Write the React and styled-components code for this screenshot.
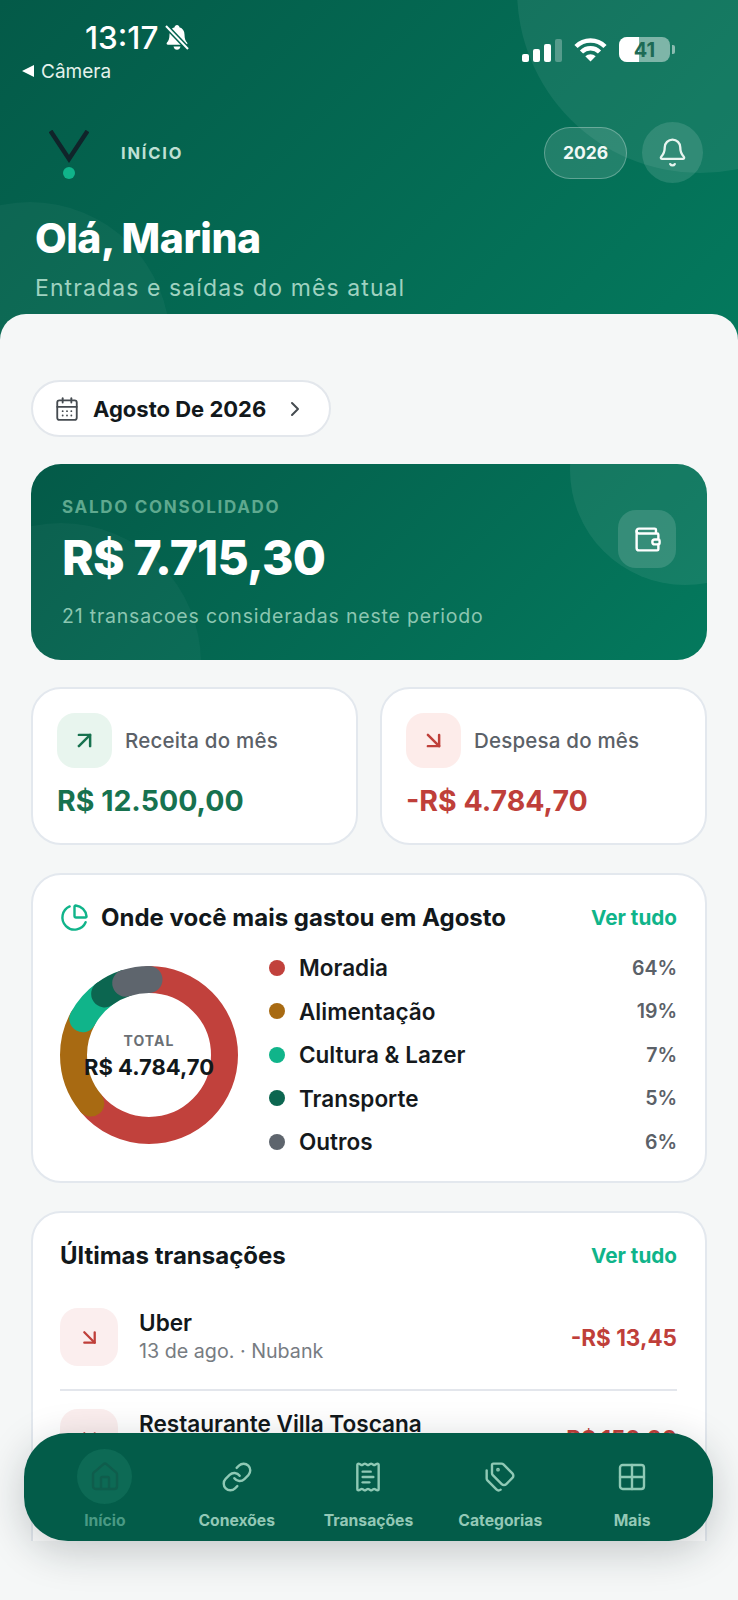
import React from 'react';
import styled, { createGlobalStyle } from 'styled-components';
import {
  ArrowDownRight,
  ArrowUpRight,
  Bell,
  CalendarDays,
  ChartPie,
  ChevronRight,
  Grid2x2,
  House,
  Link,
  ReceiptText,
  Tags,
  Wallet,
} from 'lucide-react';

const FONT = '"Inter", "Liberation Sans", sans-serif';

const GlobalStyle = createGlobalStyle`
  * { box-sizing: border-box; }
  body {
    margin: 0;
    background: #f5f7f7;
    font-family: ${FONT};
  }
`;

const Page = styled.div`
  position: relative;
  width: 738px;
  height: 1600px;
  overflow: hidden;
  background: #f5f7f7;
`;

const Scroll = styled.div`
  height: 1541px;
  overflow: hidden;
`;

const Hero = styled.header`
  position: relative;
  height: 340px;
  overflow: hidden;
  background: linear-gradient(135deg, #045a48 0%, #04795d 100%);
`;

const Blob = styled.div`
  position: absolute;
  border-radius: 50%;
  background: rgba(255, 255, 255, ${(p) => p.$alpha || 0.07});
  width: ${(p) => p.$size}px;
  height: ${(p) => p.$size}px;
  top: ${(p) => p.$top}px;
  left: ${(p) => p.$left}px;
`;

const StatusBar = styled.div`
  position: relative;
  display: flex;
  justify-content: space-between;
  height: 122px;
  padding: 20px 63px 0 22px;
  color: #fff;
`;

const StatusLeft = styled.div`
  display: flex;
  flex-direction: column;
  gap: 7px;
`;

const TimeRow = styled.div`
  display: flex;
  align-items: center;
  gap: 6px;
  margin-left: 63px;
  height: 34px;
  font-size: 31.5px;
  font-weight: 500;
`;

const BackRow = styled.div`
  display: flex;
  align-items: center;
  gap: 7px;
  height: 20px;
  font-size: 19px;
  color: #e4f2ec;
`;

const BackArrow = styled.span`
  width: 0;
  height: 0;
  border-top: 6px solid transparent;
  border-bottom: 6px solid transparent;
  border-right: 12px solid #fff;
`;

const StatusRight = styled.div`
  display: flex;
  align-items: center;
  gap: 12px;
  height: 25px;
  margin-top: 17px;
`;

const Signal = styled.div`
  display: flex;
  align-items: flex-end;
  gap: 4px;
  height: 23px;
  margin-top: 1px;
`;

const SignalBar = styled.span`
  width: 7px;
  height: ${(p) => p.$h}px;
  border-radius: 2px;
  background: ${(p) => (p.$dim ? 'rgba(255,255,255,.28)' : '#fff')};
`;

const Battery = styled.div`
  position: relative;
  width: 51px;
  height: 25px;
  border-radius: 8px;
  overflow: hidden;
  background: rgba(255, 255, 255, 0.45);
  display: flex;
  align-items: center;
  justify-content: center;
  font-size: 20px;
  font-weight: 700;
  color: #1d6a55;

  &::before {
    content: '';
    position: absolute;
    inset: 0 31px 0 0;
    background: #fff;
  }

  span {
    position: relative;
  }
`;

const BatteryNub = styled.span`
  width: 3px;
  height: 9px;
  margin-left: -10px;
  border-radius: 0 2px 2px 0;
  background: rgba(255, 255, 255, 0.5);
`;

const TopBar = styled.div`
  position: relative;
  display: flex;
  align-items: center;
  justify-content: space-between;
  height: 61px;
  padding: 0 35px 0 49px;
`;

const TopLeft = styled.div`
  display: flex;
  align-items: center;
  gap: 32px;
`;

const Logo = styled.svg`
  display: block;
  width: 40px;
  height: 50px;
  margin-top: 4px;
`;

const PageLabel = styled.span`
  font-size: 16.5px;
  font-weight: 700;
  letter-spacing: 1.8px;
  margin-top: 1px;
  color: #bfe0d5;
`;

const TopRight = styled.div`
  display: flex;
  align-items: center;
  gap: 15px;
`;

const YearPill = styled.div`
  display: flex;
  align-items: center;
  justify-content: center;
  width: 83px;
  height: 52px;
  border-radius: 26px;
  border: 1.5px solid rgba(255, 255, 255, 0.28);
  background: rgba(255, 255, 255, 0.12);
  color: #f0f8f5;
  font-size: 17.5px;
  font-weight: 700;
`;

const BellButton = styled.div`
  display: flex;
  align-items: center;
  justify-content: center;
  width: 61px;
  height: 61px;
  border-radius: 50%;
  background: rgba(255, 255, 255, 0.12);
  color: #e8f4ef;
`;

const Greeting = styled.h1`
  position: relative;
  margin: 32px 0 0 35px;
  font-size: 41px;
  line-height: 46px;
  font-weight: 800;
  letter-spacing: -0.5px;
  color: #fff;
`;

const GreetingSub = styled.p`
  position: relative;
  margin: 12px 0 0 35px;
  font-size: 23px;
  line-height: 30px;
  letter-spacing: 1.1px;
  color: #9fd2c0;
`;

const Sheet = styled.main`
  position: relative;
  margin-top: -26px;
  padding: 66px 31px 0;
  border-radius: 26px 26px 0 0;
  background: #f5f7f7;
`;

const MonthPill = styled.div`
  display: inline-flex;
  align-items: center;
  width: 300px;
  height: 57px;
  padding: 0 22px 0 21px;
  border-radius: 29px;
  border: 2px solid #e3e7ec;
  background: #fff;
  vertical-align: top;
`;

const MonthText = styled.span`
  margin: 0 auto 0 13px;
  font-size: 22px;
  font-weight: 700;
  color: #12181b;
`;

const BalanceCard = styled.section`
  position: relative;
  display: flex;
  justify-content: space-between;
  height: 196px;
  margin-top: 27px;
  padding: 32px 31px 0 31px;
  border-radius: 30px;
  overflow: hidden;
  background: linear-gradient(135deg, #045a48 0%, #04795d 100%);
`;

const BalanceText = styled.div`
  position: relative;
`;

const BalanceLabel = styled.div`
  font-size: 17px;
  line-height: 22px;
  font-weight: 700;
  letter-spacing: 1.7px;
  color: #5fa98f;
`;

const BalanceValue = styled.div`
  margin-top: 12px;
  font-size: 48px;
  line-height: 56px;
  font-weight: 800;
  letter-spacing: -0.8px;
  color: #fff;
`;

const BalanceSub = styled.div`
  margin-top: 18px;
  font-size: 19.5px;
  line-height: 24px;
  letter-spacing: 0.8px;
  color: #8cc6b1;
`;

const WalletTile = styled.div`
  position: relative;
  display: flex;
  align-items: center;
  justify-content: center;
  width: 58px;
  height: 58px;
  margin-top: 14px;
  border-radius: 18px;
  background: rgba(255, 255, 255, 0.14);
  color: #fff;
`;

const SummaryRow = styled.div`
  display: grid;
  grid-template-columns: 1fr 1fr;
  gap: 22px;
  margin-top: 27px;
`;

const Card = styled.section`
  border: 2px solid #e3e8ee;
  border-radius: 30px;
  background: #fff;
`;

const SummaryCard = styled.div`
  height: 158px;
  padding: 24px 24px 0;
  border: 2px solid #e3e8ee;
  border-radius: 30px;
  background: #fff;
`;

const SummaryHead = styled.div`
  display: flex;
  align-items: center;
  gap: 13px;
`;

const Tile = styled.div`
  display: flex;
  flex: none;
  align-items: center;
  justify-content: center;
  width: ${(p) => p.$size}px;
  height: ${(p) => p.$size}px;
  border-radius: 18px;
  background: ${(p) => p.$bg};
  color: ${(p) => p.$color};
`;

const SummaryLabel = styled.span`
  font-size: 20.5px;
  font-weight: 500;
  letter-spacing: 0.2px;
  color: #5b6168;
`;

const SummaryValue = styled.div`
  margin-top: 16px;
  font-size: 28.5px;
  line-height: 34px;
  font-weight: 700;
  color: ${(p) => p.$color};
`;

const CategoryCard = styled(Card)`
  height: 310px;
  margin-top: 28px;
  padding: 27px 28px 0 27px;
`;

const TransactionCard = styled(Card)`
  height: 420px;
  margin-top: 28px;
  padding: 27px 28px 0 27px;
`;

const CardHead = styled.div`
  display: flex;
  align-items: center;
  height: 30px;
`;

const CardTitle = styled.h2`
  margin: 0 auto 0 ${(p) => p.$gap || 0}px;
  font-size: 24px;
  font-weight: 700;
  color: #12181b;
`;

const SeeAll = styled.a`
  font-size: 20.7px;
  font-weight: 700;
  color: #10b48a;
`;

const CategoryBody = styled.div`
  display: flex;
  gap: 31px;
  margin-top: 14px;
`;

const Donut = styled.div`
  position: relative;
  flex: none;
  width: 178px;
  height: 178px;
  margin-top: 20px;
`;

const DonutCenter = styled.div`
  position: absolute;
  inset: 0;
  display: flex;
  flex-direction: column;
  align-items: center;
  justify-content: center;
`;

const DonutLabel = styled.div`
  font-size: 14px;
  line-height: 20px;
  font-weight: 700;
  letter-spacing: 1.1px;
  color: #6b7075;
`;

const DonutValue = styled.div`
  margin-top: 3px;
  font-size: 22px;
  line-height: 26px;
  font-weight: 700;
  white-space: nowrap;
  color: #12181b;
`;

const Legend = styled.ul`
  flex: 1;
  margin: 0;
  padding: 0;
  list-style: none;
`;

const LegendRow = styled.li`
  display: flex;
  align-items: center;
  height: 43.5px;
`;

const Dot = styled.span`
  width: 16px;
  height: 16px;
  border-radius: 50%;
  background: ${(p) => p.$color};
`;

const LegendName = styled.span`
  margin: 0 auto 0 14px;
  font-size: 22.5px;
  font-weight: 600;
  color: #15191c;
`;

const LegendPct = styled.span`
  font-size: 19.5px;
  font-weight: 600;
  color: #5b6168;
`;

const TxRow = styled.div`
  display: flex;
  align-items: center;
  gap: 21px;
  padding: ${(p) => (p.$first ? '0 0 23px' : '18px 0 23px')};
  margin-top: ${(p) => (p.$first ? 38 : 0)}px;
  border-bottom: ${(p) => (p.$first ? '2px solid #e3e6ec' : 'none')};
`;

const TxText = styled.div`
  margin-right: auto;
`;

const TxTitle = styled.div`
  font-size: 22.6px;
  line-height: 28px;
  font-weight: 600;
  color: #12181b;
`;

const TxSub = styled.div`
  font-size: 19.7px;
  line-height: 28px;
  color: #777c82;
`;

const TxAmount = styled.div`
  font-size: 22.5px;
  font-weight: 700;
  color: #bf3f3a;
`;

const Nav = styled.nav`
  position: absolute;
  left: 24px;
  top: 1433px;
  display: grid;
  grid-template-columns: repeat(5, 1fr);
  width: 689px;
  height: 108px;
  padding: 16px 15px 0;
  border-radius: 44px;
  background: #035c49;
  box-shadow: 0 10px 40px rgba(20, 30, 35, 0.22);
`;

const NavItem = styled.a`
  display: flex;
  flex-direction: column;
  align-items: center;
  gap: 8px;
  font-size: 15.7px;
  line-height: 18px;
  font-weight: 700;
  color: ${(p) => (p.$active ? '#4a9a84' : '#93c8b6')};
`;

const NavIcon = styled.span`
  display: flex;
  align-items: center;
  justify-content: center;
  width: 55px;
  height: 55px;
  border-radius: 50%;
  background: ${(p) => (p.$active ? '#0d6a55' : 'transparent')};
  color: ${(p) => (p.$active ? '#0f5d4c' : '#8fc9b5')};
`;

const CATEGORIES = [
  { name: 'Moradia', pct: 64, shown: 64, color: '#c1413c' },
  { name: 'Alimentação', pct: 19, shown: 19, color: '#a86a12' },
  { name: 'Cultura & Lazer', pct: 7, shown: 7, color: '#10b48a' },
  { name: 'Transporte', pct: 5, shown: 5, color: '#0c6650' },
  { name: 'Outros', pct: 5, shown: 6, color: '#5e656d' },
];

const NAV = [
  { label: 'Início', Icon: House, active: true },
  { label: 'Conexões', Icon: Link },
  { label: 'Transações', Icon: ReceiptText },
  { label: 'Categorias', Icon: Tags },
  { label: 'Mais', Icon: Grid2x2 },
];

const DonutChart = () => {
  let offset = 0;
  return (
    <svg width="178" height="178" viewBox="0 0 178 178">
      <g transform="rotate(-90 89 89)">
        {CATEGORIES.map((c) => {
          const arc = (
            <circle
              key={c.name}
              cx="89"
              cy="89"
              r="75.5"
              fill="none"
              stroke={c.color}
              strokeWidth="27"
              strokeLinecap="round"
              pathLength="100"
              strokeDasharray={`${c.pct} 100`}
              strokeDashoffset={-offset}
            />
          );
          offset += c.pct;
          return arc;
        })}
      </g>
    </svg>
  );
};

const App = () => (
  <Page>
    <GlobalStyle />
    <Scroll>
      <Hero>
        <Blob $size={366} $top={-193} $left={517} />
        <Blob $size={280} $top={202} $left={-110} $alpha={0.04} />
        <StatusBar>
          <StatusLeft>
            <TimeRow>
              13:17
              <svg width="26" height="27" viewBox="0 0 26 27" fill="#fff">
                <path d="M13 1c-1.4 0-2.3 1-2.4 2.2C7.300 4.200 5.500 7 5.500 10.500c0 4-1 6.500-2.500 8-.8.8-.4 2.300 1 2.300h18c1.400 0 1.800-1.500 1-2.300-1.500-1.500-2.500-4-2.500-8 0-3.500-1.800-6.300-5.100-7.300C15.300 2 14.400 1 13 1z" />
                <path d="M9.500 22.500h7c-.4 2-1.800 3.300-3.500 3.300s-3.100-1.300-3.500-3.300z" />
                <path d="M2 2l22 23" stroke="#046350" strokeWidth="5" />
                <path d="M2 2l22 23" stroke="#fff" strokeWidth="2" />
              </svg>
            </TimeRow>
            <BackRow>
              <BackArrow />
              Câmera
            </BackRow>
          </StatusLeft>
          <StatusRight>
            <Signal>
              <SignalBar $h={8} />
              <SignalBar $h={13} />
              <SignalBar $h={18} />
              <SignalBar $h={23} $dim />
            </Signal>
            <svg width="33" height="25" viewBox="0 0 33 25" fill="none" stroke="#fff" strokeWidth="4.500">
              <path d="M2 9.500c8-8 21-8 29 0" />
              <path d="M7.500 15c5-5 13-5 18 0" />
              <path d="M16.500 24.500l-5.200-5.300c3-2.700 7.400-2.700 10.400 0z" fill="#fff" stroke="none" />
            </svg>
            <Battery><span>41</span></Battery>
            <BatteryNub />
          </StatusRight>
        </StatusBar>
        <TopBar>
          <TopLeft>
            <Logo viewBox="0 0 40 50">
              <path d="M1.500 1l18.500 28L38.500 1" fill="none" stroke="#10242a" strokeWidth="4.500" />
              <circle cx="20" cy="43" r="6" fill="#10b48a" />
            </Logo>
            <PageLabel>INÍCIO</PageLabel>
          </TopLeft>
          <TopRight>
            <YearPill>2026</YearPill>
            <BellButton><Bell size={31} strokeWidth={1.8} /></BellButton>
          </TopRight>
        </TopBar>
        <Greeting>Olá, Marina</Greeting>
        <GreetingSub>Entradas e saídas do mês atual</GreetingSub>
      </Hero>
      <Sheet>
        <MonthPill>
          <CalendarDays size={26} strokeWidth={1.7} color="#454b50" />
          <MonthText>Agosto De 2026</MonthText>
          <ChevronRight size={24} strokeWidth={2} color="#454b50" />
        </MonthPill>
        <BalanceCard>
          <Blob $size={230} $top={-109} $left={539} />
          <Blob $size={280} $top={59} $left={-110} $alpha={0.035} />
          <BalanceText>
            <BalanceLabel>SALDO CONSOLIDADO</BalanceLabel>
            <BalanceValue>R$ 7.715,30</BalanceValue>
            <BalanceSub>21 transacoes consideradas neste periodo</BalanceSub>
          </BalanceText>
          <WalletTile><Wallet size={29} strokeWidth={2} /></WalletTile>
        </BalanceCard>
        <SummaryRow>
          <SummaryCard>
            <SummaryHead>
              <Tile $size={55} $bg="#e8f5ee" $color="#17724f"><ArrowUpRight size={27} strokeWidth={2.2} /></Tile>
              <SummaryLabel>Receita do mês</SummaryLabel>
            </SummaryHead>
            <SummaryValue $color="#17724f">R$ 12.500,00</SummaryValue>
          </SummaryCard>
          <SummaryCard>
            <SummaryHead>
              <Tile $size={55} $bg="#fdecea" $color="#bf3f3a"><ArrowDownRight size={27} strokeWidth={2.2} /></Tile>
              <SummaryLabel>Despesa do mês</SummaryLabel>
            </SummaryHead>
            <SummaryValue $color="#bf3f3a">-R$ 4.784,70</SummaryValue>
          </SummaryCard>
        </SummaryRow>
        <CategoryCard>
          <CardHead>
            <ChartPie size={29} strokeWidth={2} color="#10b48a" />
            <CardTitle $gap={12}>Onde você mais gastou em Agosto</CardTitle>
            <SeeAll>Ver tudo</SeeAll>
          </CardHead>
          <CategoryBody>
            <Donut>
              <DonutChart />
              <DonutCenter>
                <DonutLabel>TOTAL</DonutLabel>
                <DonutValue>R$ 4.784,70</DonutValue>
              </DonutCenter>
            </Donut>
            <Legend>
              {CATEGORIES.map((c) => (
                <LegendRow key={c.name}>
                  <Dot $color={c.color} />
                  <LegendName>{c.name}</LegendName>
                  <LegendPct>{c.shown}%</LegendPct>
                </LegendRow>
              ))}
            </Legend>
          </CategoryBody>
        </CategoryCard>
        <TransactionCard>
          <CardHead>
            <CardTitle>Últimas transações</CardTitle>
            <SeeAll>Ver tudo</SeeAll>
          </CardHead>
          <TxRow $first>
            <Tile $size={58} $bg="#fbeeee" $color="#bf3f3a"><ArrowDownRight size={25} strokeWidth={2.2} /></Tile>
            <TxText>
              <TxTitle>Uber</TxTitle>
              <TxSub>13 de ago. · Nubank</TxSub>
            </TxText>
            <TxAmount>-R$ 13,45</TxAmount>
          </TxRow>
          <TxRow>
            <Tile $size={58} $bg="#fbeeee" $color="#bf3f3a"><ArrowDownRight size={25} strokeWidth={2.2} /></Tile>
            <TxText>
              <TxTitle>Restaurante Villa Toscana</TxTitle>
              <TxSub>12 de ago. · Nubank</TxSub>
            </TxText>
            <TxAmount>-R$ 150,00</TxAmount>
          </TxRow>
        </TransactionCard>
      </Sheet>
    </Scroll>
    <Nav>
      {NAV.map(({ label, Icon, active }) => (
        <NavItem key={label} $active={active}>
          <NavIcon $active={active}><Icon size={32} strokeWidth={1.8} /></NavIcon>
          {label}
        </NavItem>
      ))}
    </Nav>
  </Page>
);

export default App;
